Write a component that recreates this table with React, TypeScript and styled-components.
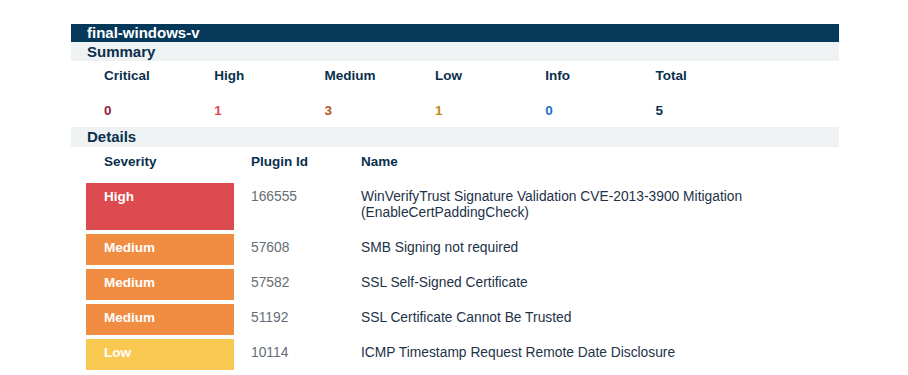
import styled, { createGlobalStyle } from "styled-components";

const GlobalStyle = createGlobalStyle`
  body {
    margin: 0;
    background: #ffffff;
    font-family: "Liberation Sans", Arial, sans-serif;
  }
`;

type Level = "critical" | "high" | "medium" | "low" | "info" | "total";

const textColors: Record<Level, string> = {
  critical: "#91243e",
  high: "#dd4b50",
  medium: "#b8561c",
  low: "#bb8a1a",
  info: "#1a72c2",
  total: "#0a2f4c",
};

const fillColors: Record<string, string> = {
  critical: "#91243e",
  high: "#dd4b50",
  medium: "#f18c43",
  low: "#f8c851",
  info: "#67ace1",
};

const summary: { label: string; value: number; level: Level }[] = [
  { label: "Critical", value: 0, level: "critical" },
  { label: "High", value: 1, level: "high" },
  { label: "Medium", value: 3, level: "medium" },
  { label: "Low", value: 1, level: "low" },
  { label: "Info", value: 0, level: "info" },
  { label: "Total", value: 5, level: "total" },
];

const findings = [
  {
    severity: "High",
    level: "high",
    id: "166555",
    name: "WinVerifyTrust Signature Validation CVE-2013-3900 Mitigation (EnableCertPaddingCheck)",
  },
  { severity: "Medium", level: "medium", id: "57608", name: "SMB Signing not required" },
  { severity: "Medium", level: "medium", id: "57582", name: "SSL Self-Signed Certificate" },
  { severity: "Medium", level: "medium", id: "51192", name: "SSL Certificate Cannot Be Trusted" },
  { severity: "Low", level: "low", id: "10114", name: "ICMP Timestamp Request Remote Date Disclosure" },
];

export default function App() {
  return (
    <Page>
      <GlobalStyle />
      <Report>
        <HostBar>final-windows-v</HostBar>
        <SectionBar>Summary</SectionBar>
        <SummaryGrid>
          {summary.map((s) => (
            <SummaryCol key={s.label}>
              <SummaryLabel>{s.label}</SummaryLabel>
              <SummaryValue level={s.level}>{s.value}</SummaryValue>
            </SummaryCol>
          ))}
        </SummaryGrid>
        <SectionBar tall>Details</SectionBar>
        <Table>
          <HeadRow>
            <HeadCell>Severity</HeadCell>
            <HeadCell>Plugin Id</HeadCell>
            <HeadCell>Name</HeadCell>
          </HeadRow>
          {findings.map((f) => (
            <Row key={f.id}>
              <SeverityCell level={f.level}>{f.severity}</SeverityCell>
              <IdCell>{f.id}</IdCell>
              <NameCell>{f.name}</NameCell>
            </Row>
          ))}
        </Table>
      </Report>
    </Page>
  );
}

const Page = styled.div`
  padding: 24px 0 0 71px;
`;

const Report = styled.div`
  width: 768px;
  display: flex;
  flex-direction: column;
`;

const HostBar = styled.div`
  background: #06385a;
  color: #ffffff;
  font-size: 15px;
  font-weight: bold;
  line-height: 18px;
  padding-left: 16px;
`;

const SectionBar = styled.div<{ tall?: boolean }>`
  background: #eef2f3;
  color: #0a2f4c;
  font-size: 15px;
  font-weight: bold;
  line-height: ${({ tall }) => (tall ? "20px" : "19px")};
  padding-left: 16px;
`;

const SummaryGrid = styled.div`
  display: grid;
  grid-template-columns: repeat(6, 110.3px);
  padding: 7px 0 8px 33px;
`;

const SummaryCol = styled.div`
  display: flex;
  flex-direction: column;
  gap: 19px;
  font-size: 13.5px;
  font-weight: bold;
  line-height: 16px;
`;

const SummaryLabel = styled.div`
  color: #0a2f4c;
`;

const SummaryValue = styled.div<{ level: Level }>`
  color: ${({ level }) => textColors[level]};
`;

const Table = styled.div`
  display: flex;
  flex-direction: column;
  gap: 4px;
  padding: 7px 0 0 15px;
  font-size: 13.5px;
  line-height: 16px;
`;

const cols = `
  display: grid;
  grid-template-columns: 148px 110px 1fr;
`;

const HeadRow = styled.div`
  ${cols}
  margin-bottom: 9px;
`;

const HeadCell = styled.div`
  color: #0a2f4c;
  font-weight: bold;
  padding-left: 17px;

  &:first-child {
    padding-left: 18px;
  }
`;

const Row = styled.div`
  ${cols}
`;

const SeverityCell = styled.div<{ level: string }>`
  background: ${({ level }) => fillColors[level]};
  color: #ffffff;
  font-weight: bold;
  padding: 6px 0 9px 18px;
`;

const IdCell = styled.div`
  color: #666d75;
  font-size: 13.8px;
  padding: 6px 0 9px 17px;
`;

const NameCell = styled.div`
  color: #1e3248;
  font-size: 13.8px;
  padding: 6px 80px 9px 17px;
`;
